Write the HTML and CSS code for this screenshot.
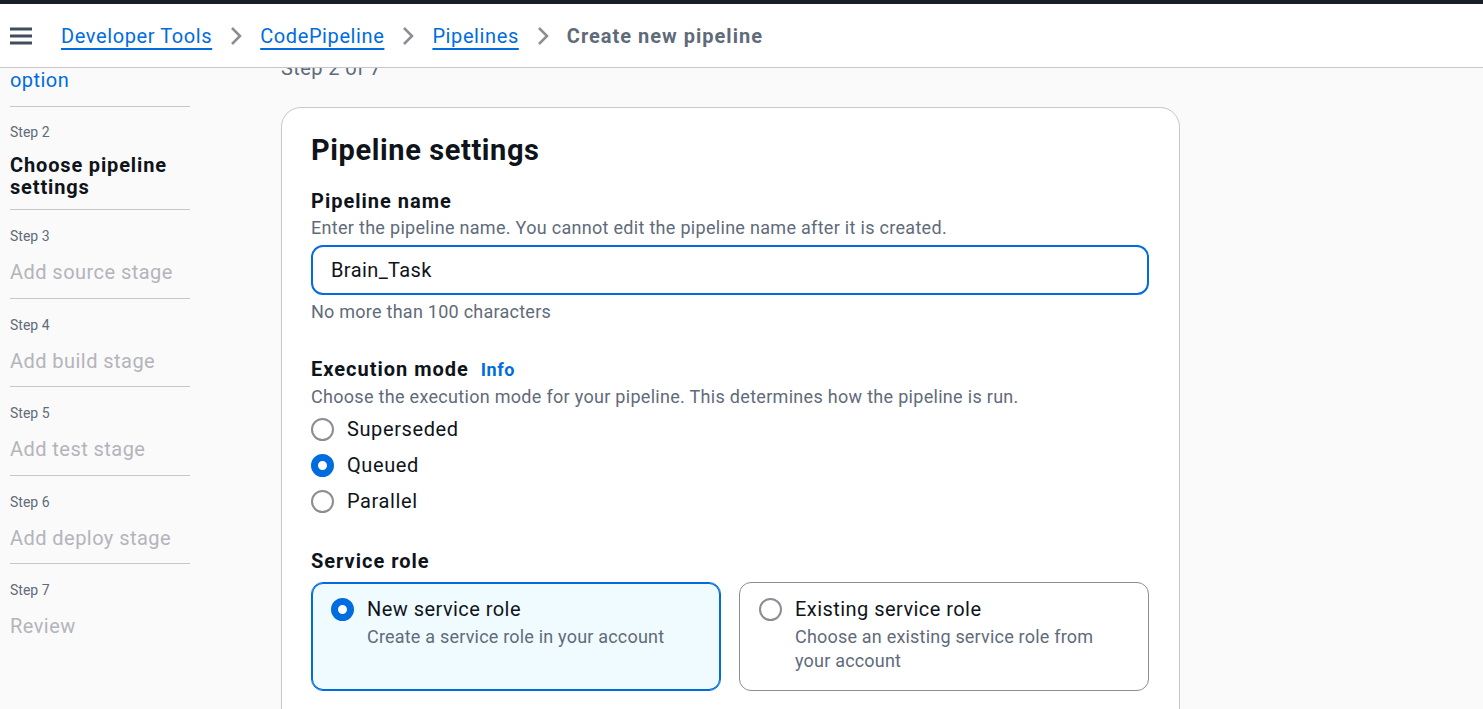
FILE: index.html
```html
<!DOCTYPE html>
<html lang="en">
<head>
<meta charset="utf-8">
<title>Create new pipeline</title>
<link rel="stylesheet" href="styles.css">
</head>
<body>
<div class="topbar"></div>
<header class="header">
  <button class="menu-btn" aria-label="Open navigation">
    <svg width="22" height="18" viewBox="0 0 22 18"><path d="M0 2h22M0 9h22M0 16h22" stroke="#414d5c" stroke-width="3" fill="none"/></svg>
  </button>
  <nav class="crumbs">
    <a class="crumb-link" href="#">Developer Tools</a>
    <svg class="chev" width="12" height="20" viewBox="0 0 12 20"><path d="M2 2l8 8-8 8" stroke="#8c8c94" stroke-width="2.5" fill="none"/></svg>
    <a class="crumb-link" href="#">CodePipeline</a>
    <svg class="chev" width="12" height="20" viewBox="0 0 12 20"><path d="M2 2l8 8-8 8" stroke="#8c8c94" stroke-width="2.5" fill="none"/></svg>
    <a class="crumb-link" href="#">Pipelines</a>
    <svg class="chev" width="12" height="20" viewBox="0 0 12 20"><path d="M2 2l8 8-8 8" stroke="#8c8c94" stroke-width="2.5" fill="none"/></svg>
    <span class="crumb-current">Create new pipeline</span>
  </nav>
</header>
<div class="layout">
  <nav class="steps">
    <div class="step step-first">
      <div class="step-label">Step 1</div>
      <a class="step-title step-link" href="#">Choose creation option</a>
    </div>
    <div class="step step-active">
      <div class="step-label">Step 2</div>
      <div class="step-title step-current">Choose pipeline settings</div>
    </div>
    <div class="step">
      <div class="step-label">Step 3</div>
      <div class="step-title step-disabled">Add source stage</div>
    </div>
    <div class="step">
      <div class="step-label">Step 4</div>
      <div class="step-title step-disabled">Add build stage</div>
    </div>
    <div class="step">
      <div class="step-label">Step 5</div>
      <div class="step-title step-disabled">Add test stage</div>
    </div>
    <div class="step">
      <div class="step-label">Step 6</div>
      <div class="step-title step-disabled">Add deploy stage</div>
    </div>
    <div class="step step-last">
      <div class="step-label">Step 7</div>
      <div class="step-title step-disabled">Review</div>
    </div>
  </nav>
  <main class="main">
    <div class="step-count">Step 2 of 7</div>
    <section class="card">
      <h1 class="card-title">Pipeline settings</h1>

      <div class="field">
        <div class="field-label">Pipeline name</div>
        <div class="field-desc">Enter the pipeline name. You cannot edit the pipeline name after it is created.</div>
        <div class="input">Brain_Task</div>
        <div class="field-constraint">No more than 100 characters</div>
      </div>

      <div class="field field-exec">
        <div class="field-label">Execution mode <a class="info" href="#">Info</a></div>
        <div class="field-desc">Choose the execution mode for your pipeline. This determines how the pipeline is run.</div>
        <div class="radio-group">
          <div class="radio-row"><span class="radio"></span><span class="radio-text">Superseded</span></div>
          <div class="radio-row"><span class="radio radio-on"></span><span class="radio-text">Queued</span></div>
          <div class="radio-row"><span class="radio"></span><span class="radio-text">Parallel</span></div>
        </div>
      </div>

      <div class="field field-role">
        <div class="field-label">Service role</div>
        <div class="tiles">
          <div class="tile tile-on">
            <span class="radio radio-on"></span>
            <div class="tile-body">
              <div class="tile-title">New service role</div>
              <div class="tile-desc">Create a service role in your account</div>
            </div>
          </div>
          <div class="tile">
            <span class="radio"></span>
            <div class="tile-body">
              <div class="tile-title">Existing service role</div>
              <div class="tile-desc">Choose an existing service role from your account</div>
            </div>
          </div>
        </div>
      </div>
    </section>
  </main>
</div>
</body>
</html>
```

FILE: styles.css
```css
* { box-sizing: border-box; }

html, body {
  margin: 0;
  padding: 0;
  height: 100%;
}

body {
  font-family: Roboto, "Liberation Sans", sans-serif;
  color: #0f141a;
  background: #fafafa;
  overflow: hidden;
}

.topbar {
  height: 4px;
  background: #161d26;
}

.header {
  height: 64px;
  background: #ffffff;
  border-bottom: 1px solid #c6c6cd;
  display: flex;
  align-items: center;
  padding-left: 10px;
}

.menu-btn {
  border: 0;
  background: none;
  padding: 0;
  margin: 0;
  width: 22px;
  height: 18px;
  display: flex;
  margin-right: 29px;
}

.crumbs {
  display: flex;
  align-items: center;
  gap: 18px;
  font-size: 20px;
  letter-spacing: 0.6px;
}

.crumb-link {
  color: #006ce0;
  text-decoration: underline;
  text-decoration-thickness: 2px;
  text-underline-offset: 5px;
}

.chev { display: block; }

.crumb-current {
  color: #5f6b7a;
  font-weight: 700;
  letter-spacing: 1px;
}

.layout {
  display: flex;
  height: calc(100% - 68px);
  overflow: hidden;
  padding-left: 10px;
}

/* Steps nav */
.steps {
  width: 180px;
  flex: none;
  margin-top: -72px;
}

.step {
  border-bottom: 1px solid #c6c6cd;
  padding: 17px 0 14.5px;
}

.step-first { padding-bottom: 15px; }

.step-last { border-bottom: 0; }

.step-label {
  font-size: 14px;
  line-height: 18px;
  color: #5f6b7a;
}

.step-title {
  display: block;
  margin-top: 16px;
  font-size: 20px;
  line-height: 22px;
  letter-spacing: 0.45px;
}

.step-link {
  color: #006ce0;
  text-decoration: none;
}

.step-active { padding-top: 16px; padding-bottom: 11px; }
.step-active .step-title { margin-top: 13px; }

.step-current {
  font-weight: 700;
  color: #0f141a;
  letter-spacing: 0.85px;
}

.step-disabled { color: #b4b4bb; }

/* Main */
.main {
  margin-left: 91px;
  margin-top: -12px;
}

.step-count {
  font-size: 20px;
  line-height: 24px;
  color: #5f6b7a;
  letter-spacing: 0.4px;
}

.card {
  width: 899px;
  margin-top: 27px;
  background: #ffffff;
  border: 1px solid #c6c6cd;
  border-radius: 20px;
  padding: 25px 30px 40px 29px;
}

.card-title {
  margin: 0;
  font-size: 29px;
  line-height: 34px;
  font-weight: 700;
  letter-spacing: 0.6px;
}

.field { margin-top: 22px; }
.field-exec { margin-top: 34px; }
.field-role { margin-top: 30px; }

.field-label {
  font-size: 20px;
  line-height: 24px;
  font-weight: 700;
  letter-spacing: 1px;
  display: flex;
  align-items: baseline;
}

.info {
  margin-left: 12px;
  font-size: 18px;
  color: #006ce0;
  text-decoration: none;
  font-weight: 700;
  letter-spacing: 0.5px;
}

.field-desc {
  margin-top: 4px;
  font-size: 18px;
  line-height: 22px;
  color: #5f6b7a;
  letter-spacing: 0.3px;
}

.input {
  margin-top: 6px;
  height: 50px;
  border: 2px solid #006ce0;
  border-radius: 12px;
  padding: 0 18px;
  display: flex;
  align-items: center;
  font-size: 20px;
  letter-spacing: 0.4px;
  color: #0f141a;
}

.field-constraint {
  margin-top: 6px;
  font-size: 18px;
  line-height: 22px;
  color: #5f6b7a;
  letter-spacing: 0.25px;
}

.radio-group {
  margin-top: 3px;
  display: flex;
  flex-direction: column;
}

.radio-row {
  height: 36px;
  display: flex;
  align-items: center;
  gap: 13px;
}

.radio {
  flex: none;
  width: 23px;
  height: 23px;
  border-radius: 50%;
  border: 2px solid #8c8c94;
  background: #ffffff;
}

.radio-on {
  border: 7px solid #006ce0;
  background: #ffffff;
}

.radio-text {
  font-size: 20px;
  line-height: 24px;
  letter-spacing: 0.6px;
}

.tiles {
  margin-top: 9px;
  display: grid;
  grid-template-columns: 1fr 1fr;
  gap: 18px;
}

.tile {
  display: flex;
  gap: 13px;
  align-items: flex-start;
  border: 1px solid #8c8c94;
  border-radius: 12px;
  padding: 14px 24px 17px 19px;
  background: #ffffff;
}

.tile .radio { margin-top: 1px; }

.tile-on {
  background: #f0fbff;
  border-color: #006ce0;
  box-shadow: inset 0 0 0 1px #006ce0;
}

.tile-title {
  font-size: 20px;
  line-height: 24px;
  letter-spacing: 0.45px;
}

.tile-desc {
  margin-top: 4px;
  font-size: 18px;
  line-height: 24px;
  color: #5f6b7a;
  letter-spacing: 0.2px;
}
```
